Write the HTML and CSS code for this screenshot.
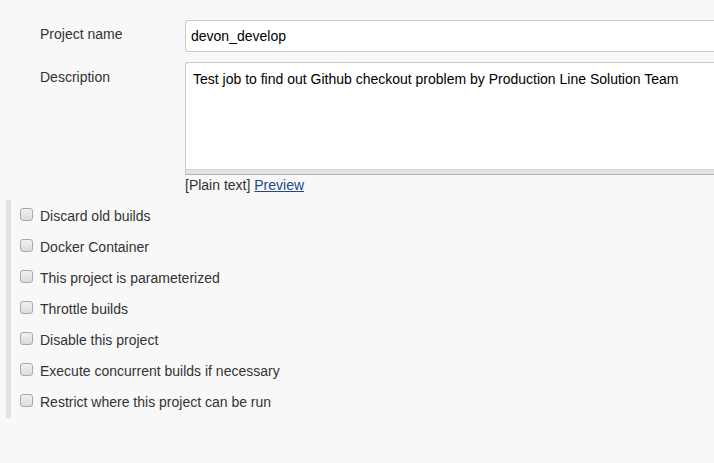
FILE: index.html
```html
<!DOCTYPE html>
<html>
<head>
<meta charset="utf-8">
<link rel="stylesheet" href="styles.css">
</head>
<body>
<div class="page">
  <div class="form-row">
    <div class="label">Project name</div>
    <div class="field"><div class="input">devon_develop</div></div>
  </div>
  <div class="form-row desc-row">
    <div class="label">Description</div>
    <div class="field">
      <div class="textarea">Test job to find out Github checkout problem by Production Line Solution Team</div>
      <div class="grip"></div>
      <div class="hint">[Plain text] <a class="preview" href="#">Preview</a></div>
    </div>
  </div>
  <div class="options">
    <div class="option"><span class="cb"></span><span>Discard old builds</span></div>
    <div class="option"><span class="cb"></span><span>Docker Container</span></div>
    <div class="option"><span class="cb"></span><span>This project is parameterized</span></div>
    <div class="option"><span class="cb"></span><span>Throttle builds</span></div>
    <div class="option"><span class="cb"></span><span>Disable this project</span></div>
    <div class="option"><span class="cb"></span><span>Execute concurrent builds if necessary</span></div>
    <div class="option"><span class="cb"></span><span>Restrict where this project can be run</span></div>
  </div>
</div>
</body>
</html>
```
FILE: styles.css
```css
html, body {
  margin: 0;
  padding: 0;
  background: #f8f8f8;
  overflow: hidden;
}
body {
  font-family: "Liberation Sans", Arial, sans-serif;
  font-size: 14px;
  color: #333;
  width: 714px;
  height: 463px;
}
.page {
  padding-top: 20px;
}
.form-row {
  display: flex;
  align-items: flex-start;
}
.label {
  flex: 0 0 185px;
  padding-left: 40px;
  box-sizing: border-box;
  padding-top: 6px;
  line-height: 16px;
}
.field {
  flex: 1;
  min-width: 0;
}
.input {
  height: 32px;
  box-sizing: border-box;
  border: 1px solid #ccc;
  border-right: none;
  border-radius: 3px 0 0 3px;
  background: #fff;
  padding: 7px 5px;
  line-height: 16px;
  color: #000;
}
.desc-row {
  margin-top: 10px;
}
.desc-row .label {
  padding-top: 7px;
}
.textarea {
  height: 108px;
  box-sizing: border-box;
  border: 1px solid #ccc;
  border-right: none;
  border-bottom: 1px solid #d4d4d4;
  border-radius: 3px 0 0 0;
  background: #fff;
  padding: 8px 7px;
  line-height: 16px;
  color: #000;
}
.grip {
  height: 5px;
  box-sizing: border-box;
  background: #e4e4e4;
  border-bottom: 1px solid #b4b4b4;
  border-left: 1px solid #ccc;
}
.hint {
  line-height: 16px;
  padding-top: 2px;
}
.preview {
  color: #204a87;
  text-decoration: underline;
}
.options {
  margin-top: 7px;
  margin-left: 6px;
  border-left: 5px solid #e2e2e2;
  padding: 8px 0 8px 9px;
  display: flex;
  flex-direction: column;
  gap: 15px;
}
.option {
  display: flex;
  align-items: center;
  height: 16px;
  line-height: 16px;
}
.cb {
  width: 13px;
  height: 13px;
  box-sizing: border-box;
  border: 1px solid #a9a9a9;
  border-radius: 3px;
  background: linear-gradient(#f0f0f0, #dcdcdc);
  margin-right: 7px;
  margin-top: -4px;
}
```
